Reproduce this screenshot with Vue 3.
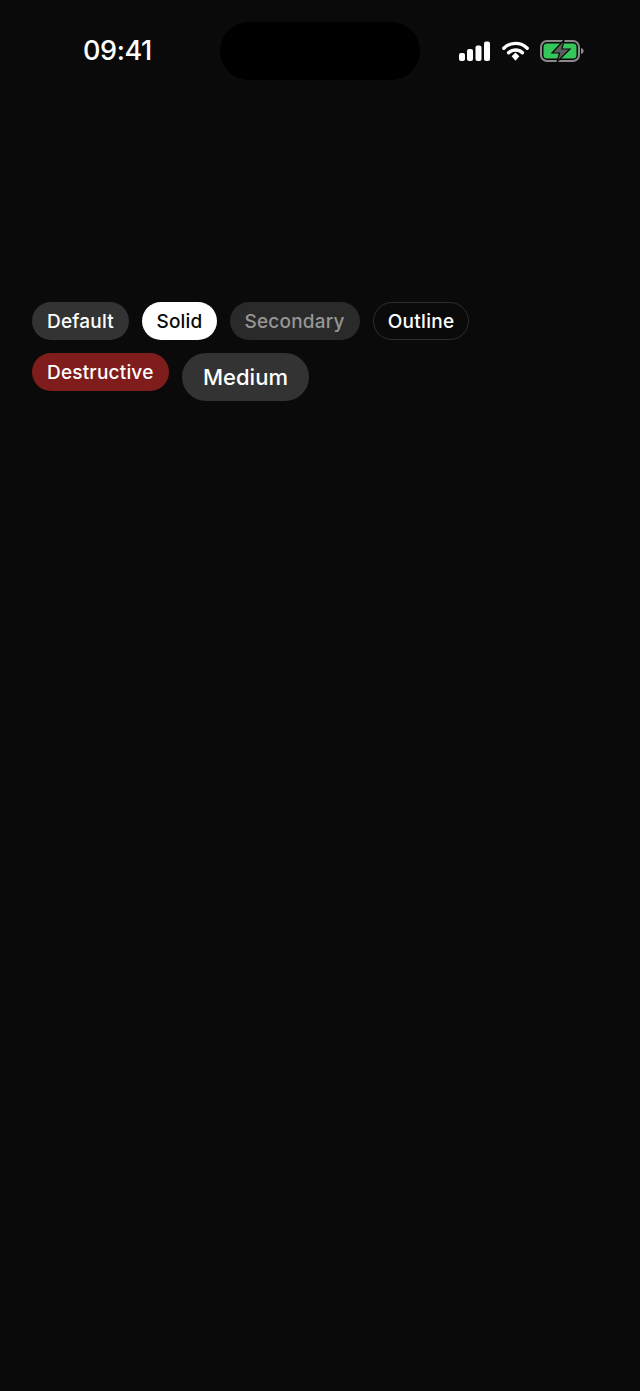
<template>
  <div class="screen">
    <div class="status-bar">
      <div class="time">09:41</div>
      <div class="island"></div>
      <div class="status-icons">
        <svg class="signal" width="31" height="20" viewBox="0 0 31 20">
          <rect x="0" y="12" width="6" height="8" rx="2" fill="#fff" />
          <rect x="8" y="8" width="6" height="12" rx="2" fill="#fff" />
          <rect x="16.500" y="4.500" width="6" height="15.500" rx="2" fill="#fff" />
          <rect x="25" y="0.500" width="6" height="19.500" rx="2" fill="#fff" />
        </svg>
        <svg class="wifi" width="27" height="20" viewBox="0 0 27 20" fill="none">
          <path d="M1.800 7.200a16.600 16.600 0 0 1 23.400 0" stroke="#fff" stroke-width="3.400" stroke-linecap="round" />
          <path d="M6.600 11.800a9.800 9.800 0 0 1 13.800 0" stroke="#fff" stroke-width="3.400" stroke-linecap="round" />
          <path d="M9.600 15.200 13.500 11.600 17.400 15.200 13.500 19.800Z" fill="#fff" />
        </svg>
        <svg class="battery" width="44" height="22" viewBox="0 0 44 22">
          <rect x="1" y="1" width="38" height="20" rx="6" fill="none" stroke="#8a8a8a" stroke-width="2" />
          <rect x="3.500" y="3.500" width="33" height="15" rx="3.500" fill="#34c759" />
          <path d="M41 8c1.600.4 2.600 1.500 2.600 3s-1 2.600-2.600 3z" fill="#8a8a8a" />
          <path d="M24 0 12 13h7.500L17 22l13-13h-8z" fill="#5c5c5c" stroke="#0a0a0a" stroke-width="1.200" />
        </svg>
      </div>
    </div>

    <div class="badges">
      <span v-for="b in badges" :key="b.label" class="badge" :class="b.kind">{{ b.label }}</span>
    </div>
  </div>
</template>

<script setup>
const badges = [
  { label: 'Default', kind: 'default' },
  { label: 'Solid', kind: 'solid' },
  { label: 'Secondary', kind: 'secondary' },
  { label: 'Outline', kind: 'outline' },
  { label: 'Destructive', kind: 'destructive' },
  { label: 'Medium', kind: 'medium' },
]
</script>

<style>
html,
body {
  margin: 0;
  background: #0a0a0a;
}
</style>

<style scoped>
.screen {
  width: 640px;
  height: 1391px;
  box-sizing: border-box;
  background: #0a0a0a;
  color: #fff;
  font-family: Inter, "Liberation Sans", sans-serif;
  overflow: hidden;
}

.status-bar {
  display: grid;
  grid-template-columns: 1fr 200px 1fr;
  align-items: center;
  height: 58px;
  padding-top: 22px;
}

.time {
  padding-left: 83px;
  font-size: 27px;
  font-weight: 500;
  letter-spacing: -0.4px;
  line-height: 58px;
}

.island {
  height: 58px;
  border-radius: 29px;
  background: #000;
}

.status-icons {
  display: flex;
  align-items: center;
  gap: 11.500px;
  padding-left: 39px;
}

.badges {
  display: flex;
  flex-wrap: wrap;
  align-items: flex-start;
  gap: 13px;
  margin-top: 222px;
  padding: 0 32px;
}

.badge {
  box-sizing: border-box;
  height: 38px;
  padding: 1px 15px 0;
  border-radius: 19px;
  font-size: 19px;
  font-weight: 500;
  letter-spacing: 0.2px;
  line-height: 38px;
  background: #333;
  color: #fff;
}

.solid {
  padding: 1px 14.500px 0;
  background: #fff;
  color: #0a0a0a;
}

.secondary {
  padding: 1px 15px 0 14.500px;
  background: #2a2a2a;
  color: #969696;
}

.outline {
  padding: 1px 13.500px 0 14px;
  border: 1.500px solid #2e2e2e;
  background: transparent;
  letter-spacing: 0.3px;
  line-height: 35px;
}

.destructive {
  background: #7f1d1d;
}

.medium {
  height: 48px;
  padding: 0 21.500px;
  border-radius: 24px;
  font-size: 22px;
  letter-spacing: 0;
  line-height: 48px;
}
</style>
